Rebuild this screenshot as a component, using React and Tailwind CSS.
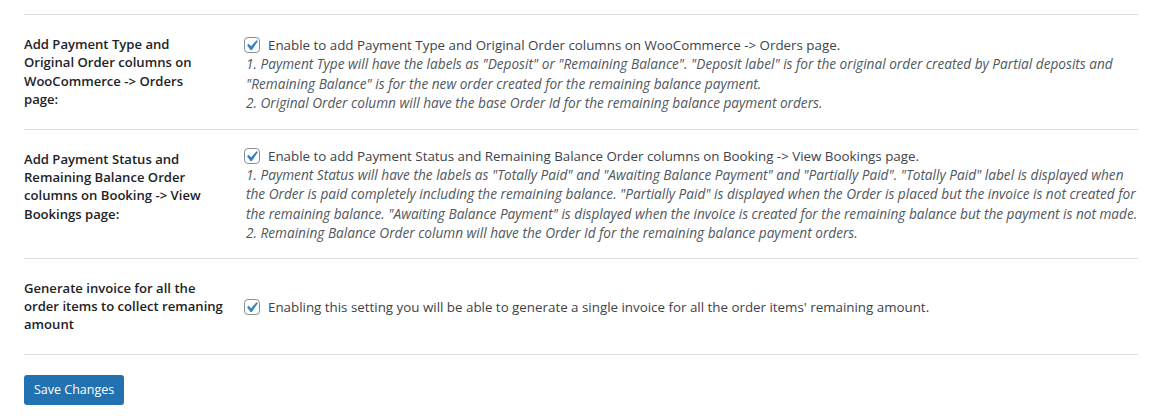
const FONT = { fontFamily: '"Open Sans", "Noto Sans", sans-serif' };

function Check() {
  return (
    <span className="relative h-4 w-4 shrink-0 rounded-[4px] border border-[#8c8f94] bg-white">
      <svg viewBox="0 0 20 20" className="absolute left-[-4px] top-[-3px] h-[21px] w-[21px]">
        <path d="M14.83 4.89l1.34.94-5.81 8.38H9.02L5.78 9.67l1.34-1.25 2.57 2.4z" fill="#3582c4" />
      </svg>
    </span>
  );
}

function Row({ label, text, lines, tdClass }) {
  return (
    <div className="flex border-b border-[#dcdcde]">
      <div className="w-[220px] shrink-0 pb-5 pr-2.5 pt-5 text-[13.1px] font-semibold leading-[18.4px] text-[#1d2327]">
        {label.map((l) => (
          <div key={l} className="whitespace-nowrap">{l}</div>
        ))}
      </div>
      <div className={`flex flex-col ${tdClass}`}>
        <label className="flex items-center gap-2 whitespace-nowrap text-[13.35px] leading-[18px] text-[#3c434a]">
          <Check />
          {text}
        </label>
        {lines && (
          <div className="pl-0.5 text-[13.65px] italic leading-[19.5px] text-[#50575e]">
            {lines.map((l) => (
              <div key={l} className="whitespace-nowrap">{l}</div>
            ))}
          </div>
        )}
      </div>
    </div>
  );
}

export default function App() {
  return (
    <div className="min-h-[416px] bg-white px-6" style={FONT}>
      <div className="h-[15px] border-b border-[#dcdcde]" />
      <Row
        tdClass="pt-[21px] pb-4"
        label={['Add Payment Type and', 'Original Order columns on', 'WooCommerce -> Orders', 'page:']}
        text="Enable to add Payment Type and Original Order columns on WooCommerce -> Orders page."
        lines={[
          '1. Payment Type will have the labels as "Deposit" or "Remaining Balance". "Deposit label" is for the original order created by Partial deposits and',
          '"Remaining Balance" is for the new order created for the remaining balance payment.',
          '2. Original Order column will have the base Order Id for the remaining balance payment orders.',
        ]}
      />
      <Row
        tdClass="pt-[17px] pb-[15px]"
        label={['Add Payment Status and', 'Remaining Balance Order', 'columns on Booking -> View', 'Bookings page:']}
        text="Enable to add Payment Status and Remaining Balance Order columns on Booking -> View Bookings page."
        lines={[
          '1. Payment Status will have the labels as "Totally Paid" and "Awaiting Balance Payment" and "Partially Paid". "Totally Paid" label is displayed when',
          'the Order is paid completely including the remaining balance. "Partially Paid" is displayed when the Order is placed but the invoice is not created for',
          'the remaining balance. "Awaiting Balance Payment" is displayed when the invoice is created for the remaining balance but the payment is not made.',
          '2. Remaining Balance Order column will have the Order Id for the remaining balance payment orders.',
        ]}
      />
      <Row
        tdClass="justify-center pt-[2px]"
        label={['Generate invoice for all the', 'order items to collect remaning', 'amount']}
        text="Enabling this setting you will be able to generate a single invoice for all the order items' remaining amount."
      />
      <div className="pt-5">
        <button className="h-[30px] rounded-[3px] bg-[#2271b1] px-[10px] text-[12.5px] leading-[28px] text-white">
          Save Changes
        </button>
      </div>
    </div>
  );
}
